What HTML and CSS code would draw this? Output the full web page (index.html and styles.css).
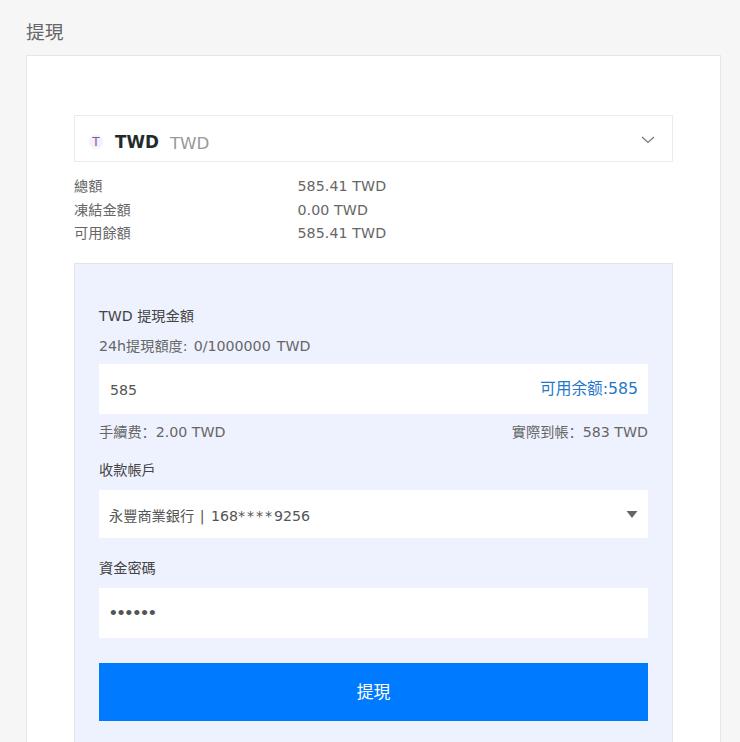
FILE: index.html
```html
<!DOCTYPE html>
<html lang="zh-Hant">
<head>
  <meta charset="UTF-8" />
  <title>提現</title>
  <link rel="stylesheet" href="styles.css">
</head>
<body>
  <h1 class="page-title">提現</h1>
  <div class="card">
    <div class="coin-select">
      <span class="coin-icon">T</span>
      <span class="coin-name">TWD</span>
      <span class="coin-full">TWD</span>
      <svg class="chevron" width="14" height="8" viewBox="0 0 14 8"><path d="M1 1l6 5.5L13 1" fill="none" stroke="#777" stroke-width="1.2"/></svg>
    </div>

    <div class="balance">
      <div class="balance-row"><span>總額</span><span class="amount">585.41 TWD</span></div>
      <div class="balance-row"><span>凍結金額</span><span class="amount">0.00 TWD</span></div>
      <div class="balance-row"><span>可用餘額</span><span class="amount">585.41 TWD</span></div>
    </div>

    <form class="withdraw">
      <label class="label" for="amount">TWD 提現金額</label>
      <div class="limit">24h提現額度: 0/1000000 TWD</div>
      <div class="field">
        <input id="amount" type="text" value="585">
        <a class="available" lang="zh-Hans">可用余额:585</a>
      </div>
      <div class="fee" lang="zh-Hans">
        <span>手續费：2.00 TWD</span>
        <span>實際到帳：583 TWD</span>
      </div>

      <div class="label account-label">收款帳戶</div>
      <div class="field account-field">
        <div class="account">永豐商業銀行<span class="bar"> | </span>168<span class="mask">****</span>9256</div>
        <svg class="caret" width="12" height="8" viewBox="0 0 12 8"><path d="M.5 0h11L6 7z" fill="#666"/></svg>
      </div>

      <label class="label password-label" for="password">資金密碼</label>
      <div class="field">
        <input id="password" class="password" type="password" value="123456">
      </div>

      <button type="button" class="submit">提現</button>
    </form>
  </div>
</body>
</html>
```
FILE: styles.css
```css
* {
  box-sizing: border-box;
}

body {
  display: flex;
  flex-direction: column;
  margin: 0;
  height: 100vh;
  padding: 0 19px 0 26px;
  background-color: #f6f6f6;
  color: #666;
  font-family: "DejaVu Sans", "Noto Sans CJK SC", sans-serif;
  font-size: 14.2px;
}

.page-title {
  margin: 0;
  padding-top: 10px;
  height: 55px;
  line-height: 45px;
  font-size: 18.7px;
  font-weight: normal;
}

.card {
  display: flex;
  flex: 1;
  flex-direction: column;
  padding: 59px 47px 0;
  background-color: #fff;
  border: 1px solid #e6e6e6;
  border-bottom: none;
}

.coin-select {
  display: flex;
  align-items: center;
  height: 47px;
  padding: 6px 17px 0 14px;
  border: 1px solid #ebebeb;
}

.coin-icon {
  width: 14px;
  height: 14px;
  border-radius: 50%;
  background-color: #f5f0fb;
  color: #70609c;
  font-size: 12px;
  line-height: 15px;
  text-align: center;
}

.coin-name {
  margin-left: 12px;
  color: #222b2b;
  font-size: 16.8px;
  font-weight: bold;
}

.coin-full {
  margin-left: 11px;
  padding-top: 2px;
  color: #999;
  font-size: 16.7px;
}

.chevron {
  margin-left: auto;
  margin-bottom: 4px;
}

.balance {
  padding-top: 13px;
  height: 101px;
}

.balance-row {
  display: flex;
  height: 23.6px;
  line-height: 23.6px;
}

.balance-row span:first-child {
  width: 223.4px;
}

.amount {
  letter-spacing: 0.1px;
}

.withdraw {
  flex: 1;
  padding: 40px 24px 0;
  background-color: #eef2ff;
  border: 1px solid #e2e4ec;
  border-bottom: none;
}

.label {
  display: block;
  height: 24px;
  line-height: 24px;
  color: #444;
}

.limit {
  height: 36px;
  padding-top: 6px;
  line-height: 24px;
  word-spacing: 1.6px;
}

.field {
  display: flex;
  align-items: center;
  height: 50px;
  padding: 0 10px;
  background-color: #fff;
}

.field input {
  flex: 1;
  min-width: 0;
  height: 100%;
  padding: 2px 0 0 1px;
  border: none;
  outline: none;
  background: none;
  color: #555;
  font: inherit;
}

.field .password {
  padding-top: 0;
  font-family: "Liberation Sans", sans-serif;
  font-size: 19px;
  letter-spacing: 1.15px;
}

.available {
  margin-bottom: 3px;
  color: #1f78c8;
  font-size: 15.7px;
}

.fee {
  display: flex;
  justify-content: space-between;
  padding-top: 6px;
  line-height: 24px;
}

.account-label {
  margin-top: 14px;
}

.account-field {
  height: 48px;
  margin-top: 8px;
}

.account {
  flex: 1;
  padding-top: 2px;
  color: #555;
}

.bar {
  letter-spacing: 1px;
}

.mask {
  letter-spacing: 1.9px;
}

.caret {
  margin-top: 1px;
}

.password-label {
  margin: 18px 0 8px;
}

.submit {
  display: block;
  width: 100%;
  height: 58px;
  margin-top: 25px;
  padding-bottom: 3px;
  border: none;
  background-color: #007aff;
  color: #fff;
  font-family: inherit;
  font-size: 16.8px;
}
```
